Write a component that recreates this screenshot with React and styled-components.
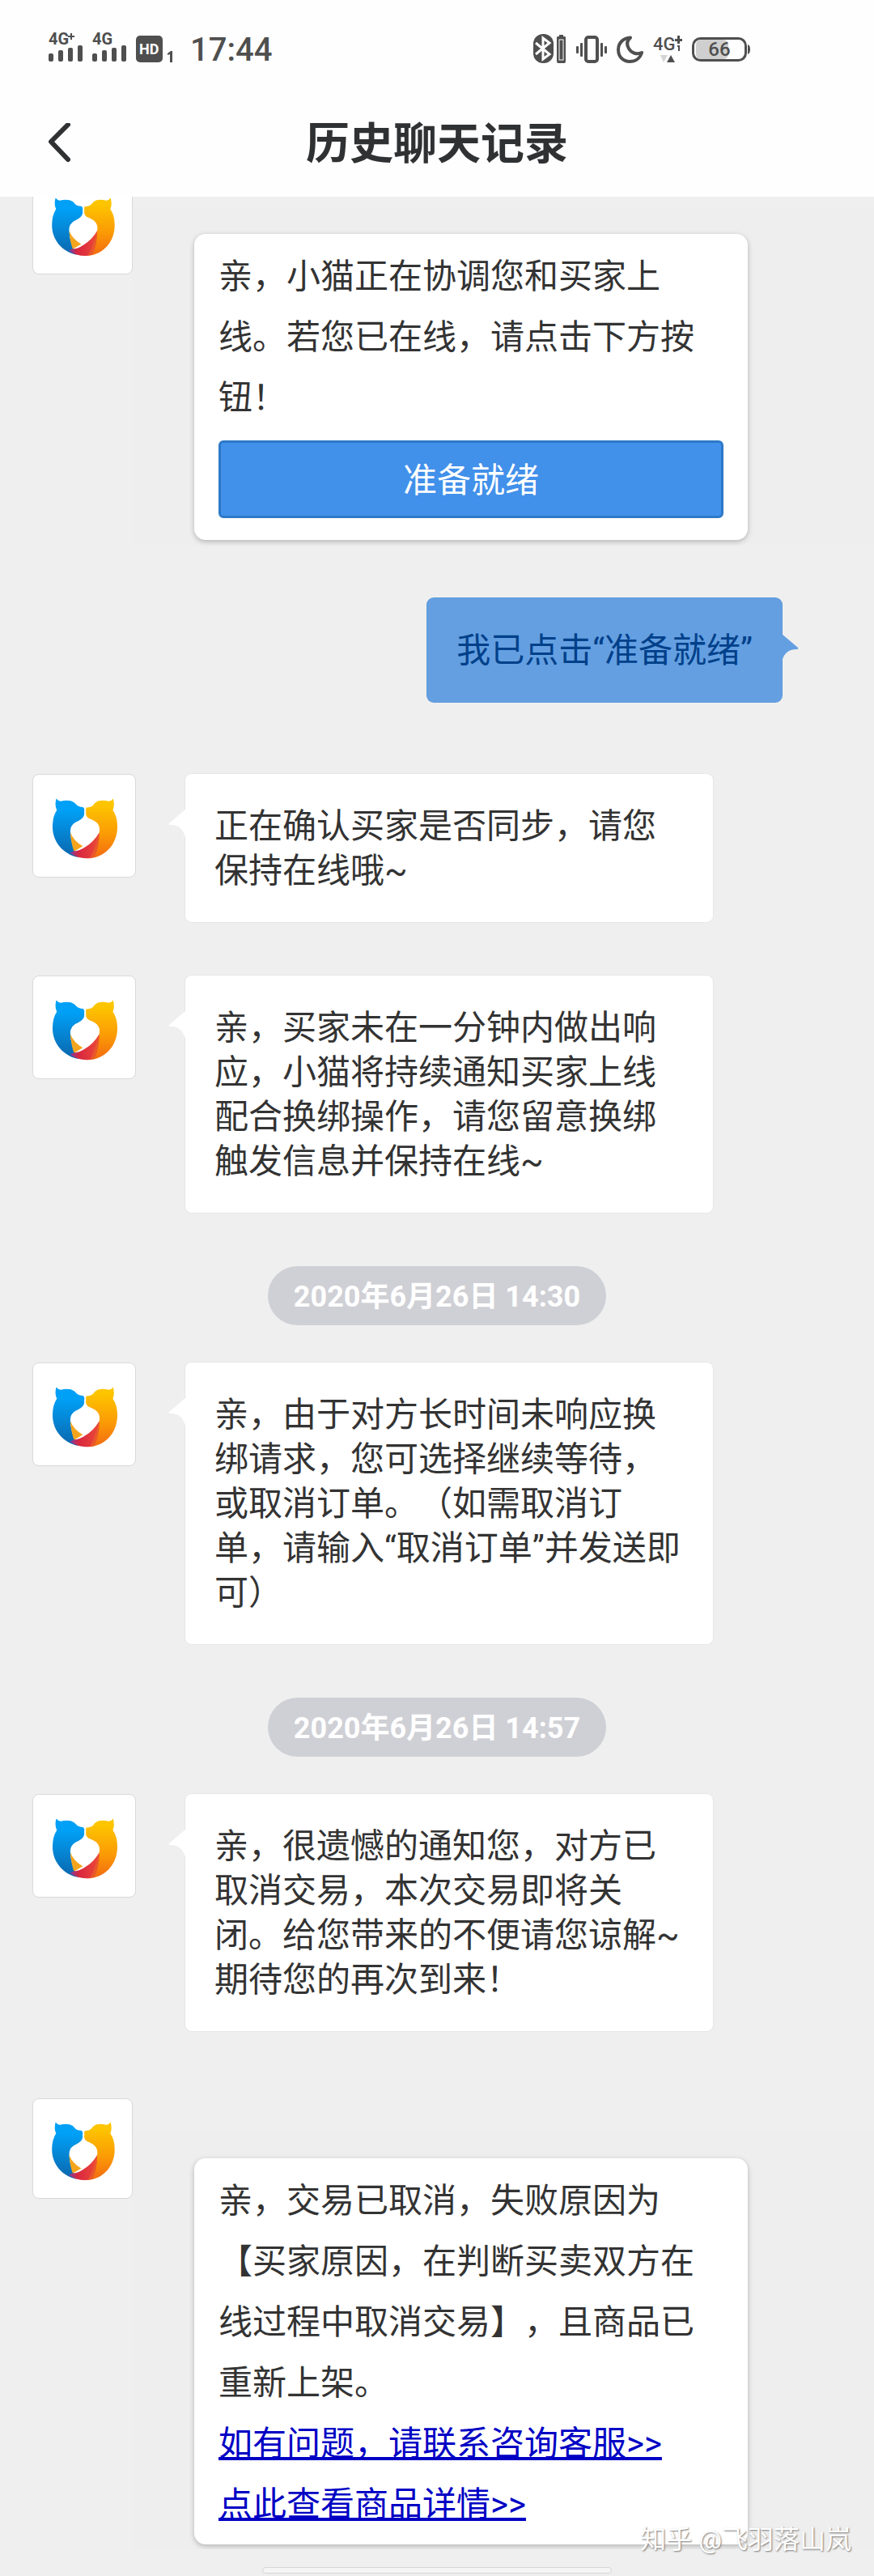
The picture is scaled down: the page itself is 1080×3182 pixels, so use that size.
import styled, {createGlobalStyle, css} from "styled-components"

//styles
const GlobalStyle = createGlobalStyle`
* {
box-sizing: border-box;
}
body {
margin: 0;
background-color: #efefef;
color: #333333;
font-family: Roboto, "Noto Sans CJK SC", sans-serif;
text-spacing-trim: space-all;
}
`

const Screen = styled.div`
position: relative;
display: flex;
flex-direction: column;
min-height: 100vh;
`

const Header = styled.header`
background-color: #fefefe;
padding-bottom: 9px;
`

const StatusBar = styled.div`
display: flex;
align-items: center;
justify-content: space-between;
height: 120px;
padding: 0 153px 0 60px;
color: #4f4f4f;

svg {
display: block;
fill: currentColor;
font-weight: 700;
}
`

const StatusGroup = styled.div`
display: flex;
align-items: center;
gap: ${({$gap}) => $gap}px;
`

const Clock = styled.time`
font-size: 40px;
line-height: 48px;
font-weight: 500;
padding: 4px 0 0 10px;
`

const TitleBar = styled.div`
display: grid;
grid-template-columns: 1fr auto 1fr;
align-items: center;
height: 114px;
padding: 0 60px;
color: #2f3133;
`

const BackButton = styled.button`
justify-self: start;
border: none;
padding: 0;
background: none;
color: inherit;

svg {
display: block;
}
`

const Title = styled.h1`
margin: 0;
padding-top: 4px;
font-size: 54px;
line-height: 72px;
font-weight: 700;
`

const ChatList = styled.main`
display: flex;
flex-direction: column;
overflow: hidden;

> :last-child {
margin-bottom: 0;
}
`

const MessageRow = styled.div`
display: flex;
align-items: flex-start;
gap: 61px;
padding: 0 40px;
margin-bottom: 66px;

${({$mine}) => $mine && css`
justify-content: flex-end;
padding-right: 114px;
margin-bottom: 89px;
`}
`

const CardRow = styled.div`
display: flex;
align-items: flex-start;
padding-left: 40px;
margin: 17px 0 66px;

&:first-child {
margin-top: -28px;
}
`

const AvatarBox = styled.div`
flex: none;
width: ${({$size}) => $size}px;
height: ${({$size}) => $size}px;
border: 1px solid #d9d9dc;
border-radius: 8px;
background-color: white;
overflow: hidden;

svg {
display: block;
width: 100%;
height: 100%;
}
`

const Bubble = styled.div`
position: relative;
max-width: 652px;
padding: 37px 36px 36px;
border-radius: 8px;
font-size: 42px;
line-height: 55px;
color: ${({$mine}) => ($mine ? "#00408a" : "#333333")};
background-color: ${({$mine}) => ($mine ? "#649fe1" : "white")};
box-shadow: 0 0 0 1px ${({$mine}) => ($mine ? "#5f9adb" : "#e6e6e6")};
`

const Tail = styled.svg`
position: absolute;
top: 44px;
width: 21px;
height: 34px;
${({$mine}) => ($mine ? "left: 100%; transform: scaleX(-1); fill: #649fe1;" : "right: 100%; fill: white;")}
`

const CardPanel = styled.div`
flex: 1;
margin-top: 41px;
padding: 33px 40px 6px 76px;
background-color: #eeeeee;
`

const Card = styled.div`
max-width: 684px;
padding: 15px 30px 12px;
border-radius: 14px;
background-color: white;
box-shadow: 0 2px 6px rgba(0, 0, 0, 0.25);
font-size: 42px;
line-height: 75px;
`

const CardText = styled.p`
margin: 0;
`

const ReadyButton = styled.button`
display: block;
width: 100%;
height: 96px;
margin: 15px 0;
padding: 0 0 6px;
border: 3px solid #2d78c8;
border-radius: 6px;
background-color: #4190ea;
color: white;
font-family: inherit;
font-size: 42px;
`

const CardLink = styled.a`
display: block;
color: #0000c4;
text-decoration: underline;
text-decoration-thickness: 4px;
text-underline-offset: 2px;
text-decoration-skip-ink: none;
width: fit-content;
`

const TimePill = styled.time`
align-self: center;
height: 73px;
padding: 0 32px;
margin-bottom: 46px;
border-radius: 37px;
background-color: #cfd0d5;
color: white;
font-size: 36px;
line-height: 77px;
font-weight: 700;
`

const HomeBar = styled.div`
width: 40%;
height: 8px;
margin: 22px auto 3px;
border: 1px solid #d6d6d6;
border-radius: 4px;
background-color: #f5f5f5;
`

const Watermark = styled.div`
position: absolute;
right: 28px;
bottom: 24px;
font-size: 32px;
line-height: 42px;
color: white;
text-shadow: 1px 1px 2px #777777;
`

function Avatar({size = 128}){
    return(
        <AvatarBox $size={size}>
            <svg viewBox="30 45 384 384" role="img" aria-label="客服头像">
                <defs>
                    <linearGradient id="catBlue" x1="0" y1="0" x2="0" y2="1">
                        <stop offset="0.2" stopColor="#00a0f6" />
                        <stop offset="1" stopColor="#0b66ac" />
                    </linearGradient>
                    <linearGradient id="catGold" x1="0" y1="0" x2="0" y2="1">
                        <stop offset="0.1" stopColor="#fdc500" />
                        <stop offset="0.6" stopColor="#fb9a05" />
                        <stop offset="1" stopColor="#f26a12" />
                    </linearGradient>
                    <linearGradient id="catRed" x1="0" y1="0" x2="1" y2="0">
                        <stop offset="0" stopColor="#7a3da8" />
                        <stop offset="0.3" stopColor="#d8263f" />
                        <stop offset="1" stopColor="#ec4a38" />
                    </linearGradient>
                </defs>
                <path fill="url(#catBlue)" d="M117 135Q124 144 134 145Q152 139 172 143Q186 147 193 158Q200 166 217 167Q225 171 222 184Q225 200 211 212Q202 219 188 225Q168 238 170 262Q172 310 200 356C145 345 103 300 103 240Q103 202 119 178Q110 160 117 135Z" />
                <path fill="url(#catGold)" d="M331 135Q325 144 314 145Q294 139 274 144Q264 148 255 161Q246 169 231 168Q227 173 229 184Q226 199 239 209Q252 214 264 221Q284 235 279 262Q270 315 242 360C305 353 347 305 347 240Q347 202 330 178Q338 160 331 135Z" />
                <path fill="#f5a51d" d="M170 262Q182 294 217 314L184 334Q173 305 170 262Z" />
                <path fill="url(#catRed)" d="M182 333Q205 332 226 317Q258 298 279 262Q278 318 244 359Q205 364 168 340Z" />
                <path fill="#e9582b" d="M279 262Q264 320 244 359L260 355Q280 316 279 262Z" />
            </svg>
        </AvatarBox>
    )
}

function Message({mine, children}){
    return(
        <MessageRow $mine={mine}>
            {!mine && <Avatar />}
            <Bubble $mine={mine}>
                <Tail $mine={mine} viewBox="0 0 21 34" aria-hidden="true">
                    <path d="M21 0L1 17Q0 19 3 19Q17 19 21 34Z" />
                </Tail>
                {children}
            </Bubble>
        </MessageRow>
    )
}

function CardMessage({children}){
    return(
        <CardRow>
            <Avatar size={124} />
            <CardPanel>
                <Card>{children}</Card>
            </CardPanel>
        </CardRow>
    )
}

function Signal({plus}){
    return(
        <svg width="42" height="52" viewBox="0 -6 42 52">
            <text x="0" y="15" fontSize="20">4G</text>
            {plus && <path d="M24 4h3v-3h2v3h3v2h-3v3h-2v-3h-3z" />}
            <rect x="0" y="26" width="6" height="10" rx="2" />
            <rect x="12" y="22" width="6" height="14" rx="2" />
            <rect x="24" y="19" width="6" height="17" rx="2" />
            <rect x="36" y="16" width="6" height="20" rx="2" />
        </svg>
    )
}

function StatusIcons(){
    return(
        <StatusGroup $gap={12}>
            {/* bluetooth with its battery */}
            <svg width="41" height="36" viewBox="0 0 41 36">
                <rect x="0" y="0" width="25" height="36" rx="12" />
                <path d="M3 11L20 25L12 31V5L20 11L3 25" fill="none" stroke="white" strokeWidth="3" />
                <path d="M32 1h5v2h2q1 0 1 2v29q0 2-2 2h-7q-2 0-2-2V5q0-2 1-2h2z" />
                <rect x="32" y="7" width="5" height="25" fill="none" stroke="white" strokeWidth="1" />
            </svg>
            <svg width="38" height="36" viewBox="0 0 38 36">
                <rect x="12" y="4" width="14" height="30" rx="3" fill="none" stroke="currentColor" strokeWidth="4" />
                <rect x="0" y="15" width="3" height="9" rx="1" />
                <rect x="5" y="11" width="3" height="17" rx="1" />
                <rect x="30" y="11" width="3" height="17" rx="1" />
                <rect x="35" y="15" width="3" height="9" rx="1" />
            </svg>
            <svg width="33" height="36" viewBox="0 0 33 36">
                <path d="M17 4.500C8 5 2 11 2 19.500C2 28 8 34 16 34C23 34 29 30 31 23C24 26 18 23 15 18C12 13 13 8 17 4.500Z" fill="none" stroke="currentColor" strokeWidth="4" strokeLinejoin="round" />
            </svg>
            <svg width="36" height="36" viewBox="0 0 36 36">
                <text x="0" y="20" fontSize="22" fontWeight="500">4G</text>
                <path d="M27 6h3v-4h3v4h3v3h-3v3h-3v-3h-3z" />
                <path d="M30 14h3v7h-2v-5h-1z" />
                <path d="M9 26h9l-5 9z" fill="#d4d4d4" />
                <path d="M17 35h10l-5-9z" />
            </svg>
            <svg width="72" height="36" viewBox="0 0 72 36">
                <rect x="5" y="7" width="40" height="24" rx="6" fill="#cfcfcf" />
                <rect x="1.500" y="5.500" width="65" height="27" rx="9" fill="none" stroke="currentColor" strokeWidth="3" />
                <path d="M69 13q3 1 3 6t-3 6z" />
                <text x="34" y="27" fontSize="24" fontWeight="500" textAnchor="middle">66</text>
            </svg>
        </StatusGroup>
    )
}

export default function App(){


    return(
        <>
        <GlobalStyle />
        <Screen>
            <Header>
                <StatusBar>
                    <StatusGroup $gap={12}>
                        <Signal plus />
                        <Signal />
                        <svg width="45" height="36" viewBox="0 0 45 36">
                            <rect x="0" y="2" width="33" height="33" rx="5" />
                            <text x="4" y="25" fontSize="18" fill="white">HD</text>
                            <path d="M39 24l4-3h2v14h-3v-10l-3 1z" />
                        </svg>
                        <Clock>17:44</Clock>
                    </StatusGroup>
                    <StatusIcons />
                </StatusBar>
                <TitleBar>
                    <BackButton aria-label="返回">
                        <svg width="28" height="50" viewBox="0 0 28 50" fill="none" stroke="currentColor" strokeWidth="6" strokeLinecap="round" strokeLinejoin="round">
                            <path d="M24 2L3 23L24 45" />
                        </svg>
                    </BackButton>
                    <Title>历史聊天记录</Title>
                </TitleBar>
            </Header>

{/* Messages start here */}

            <ChatList>
                <CardMessage>
                    <CardText>亲，小猫正在协调您和买家上线。若您已在线，请点击下方按钮！</CardText>
                    <ReadyButton>准备就绪</ReadyButton>
                </CardMessage>
                <Message mine>我已点击“准备就绪”</Message>
                <Message>正在确认买家是否同步，请您保持在线哦~</Message>
                <Message>亲，买家未在一分钟内做出响应，小猫将持续通知买家上线配合换绑操作，请您留意换绑触发信息并保持在线~</Message>
                <TimePill>2020年6月26日 14:30</TimePill>
                <Message>亲，由于对方长时间未响应换绑请求，您可选择继续等待，或取消订单。（如需取消订单，请输入“取消订单”并发送即可）</Message>
                <TimePill>2020年6月26日 14:57</TimePill>
                <Message>亲，很遗憾的通知您，对方已取消交易，本次交易即将关闭。给您带来的不便请您谅解~期待您的再次到来！</Message>
                <CardMessage>
                    <CardText>亲，交易已取消，失败原因为【买家原因，在判断买卖双方在线过程中取消交易】，且商品已重新上架。</CardText>
                    <CardLink href="#service">如有问题，请联系咨询客服&gt;&gt;</CardLink>
                    <CardLink href="#goods">点此查看商品详情&gt;&gt;</CardLink>
                </CardMessage>
            </ChatList>
            <HomeBar />
            <Watermark>知乎 @飞羽落山岚</Watermark>
        </Screen>
        </>
    )
}
